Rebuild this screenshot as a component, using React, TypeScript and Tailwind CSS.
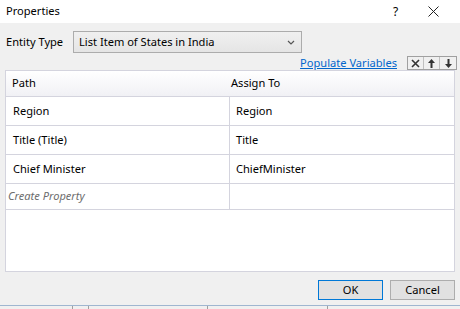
import React from "react"

const rows = [
  { path: "Region", assign: "Region" },
  { path: "Title (Title)", assign: "Title" },
  { path: "Chief Minister", assign: "ChiefMinister" },
]

export default function App() {
  return (
    <div
      className="relative w-[460px] h-[309px] overflow-hidden bg-[#f0f0f0] text-[11.1px] text-black"
      style={{ fontFamily: '"Noto Sans", "Open Sans", sans-serif' }}
    >
      {/* Title bar */}
      <div className="flex h-[23px] items-center bg-white pl-[6px]">
        <span className="flex-1">Properties</span>
        <span className="w-[14px] text-[12px]">?</span>
        <div className="flex w-[53px] justify-center">
          <svg width="11" height="11" viewBox="0 0 11 11" stroke="#222" strokeWidth="1">
            <path d="M0.5 0.5 L10.5 10.5 M10.5 0.5 L0.5 10.5" />
          </svg>
        </div>
      </div>

      <div className="px-[5px]">
        {/* Entity type */}
        <div className="mt-[8px] flex h-[22px] items-center">
          <span className="w-[68px] pl-[1px]">Entity Type</span>
          <div className="flex h-[22px] w-[229px] items-center border border-[#acacac] bg-gradient-to-b from-[#f0f0f0] to-[#e5e5e5] pl-[5px] pr-[6px]">
            <span className="flex-1">List Item of States in India</span>
            <svg width="8" height="5" viewBox="0 0 8 5" fill="none" stroke="#555" strokeWidth="1.2">
              <path d="M1 1 L4 4 L7 1" />
            </svg>
          </div>
        </div>

        {/* Populate + tool buttons */}
        <div className="mt-[1px] flex h-[16px] items-end justify-end">
          <span className="mr-[10px] leading-[15px] text-[#0066cc] underline">Populate Variables</span>
          <div className="mr-[-2px] flex h-[14px] border border-[#a0a0a0] bg-[#f0f0f0]">
            <div className="flex w-[16px] items-center justify-center border-r border-[#c0c0c0]">
              <svg width="9" height="9" viewBox="0 0 9 9" stroke="#333" strokeWidth="1.6">
                <path d="M1 1 L8 8 M8 1 L1 8" />
              </svg>
            </div>
            <div className="flex w-[16px] items-center justify-center border-r border-[#c0c0c0]">
              <svg width="7" height="9" viewBox="0 0 7 9" fill="#333">
                <path d="M3.5 0 L7 4 L4.5 4 L4.5 9 L2.5 9 L2.5 4 L0 4 Z" />
              </svg>
            </div>
            <div className="flex w-[16px] items-center justify-center">
              <svg width="7" height="9" viewBox="0 0 7 9" fill="#333">
                <path d="M3.5 9 L7 5 L4.5 5 L4.5 0 L2.5 0 L2.5 5 L0 5 Z" />
              </svg>
            </div>
          </div>
        </div>

        {/* Table */}
        <div className="h-[202px] w-[450px] border border-[#d4d4de] bg-white">
          <div className="flex h-[26px] items-center border-b border-[#d4d4de] bg-gradient-to-b from-white to-[#f1f1f5]">
            <span className="w-[224px] pl-[6px]">Path</span>
            <span className="pl-[1px]">Assign To</span>
          </div>
          {rows.map((r) => (
            <div key={r.path} className="flex h-[29px] border-b border-[#d4d4de]">
              <div className="flex w-[224px] items-center border-r border-[#d4d4de] pl-[7px]">{r.path}</div>
              <div className="flex items-center pl-[6px]">{r.assign}</div>
            </div>
          ))}
          <div className="flex h-[26px] border-b border-[#d4d4de]">
            <div className="flex w-[224px] items-center border-r border-[#d4d4de] pl-[2px] italic text-[#6d6d6d]">
              Create Property
            </div>
            <div />
          </div>
        </div>

        {/* Buttons */}
        <div className="mt-[8px] flex justify-end gap-[7px]">
          <button className="h-[20px] w-[65px] border border-[#0078d7] bg-[#e1e1e1]">OK</button>
          <button className="h-[20px] w-[65px] border border-[#adadad] bg-[#e1e1e1]">Cancel</button>
        </div>
      </div>

      {/* Bottom strip */}
      <div className="absolute bottom-0 left-0 right-0 h-[4px] border-t border-[#9fb6d0] bg-[#f0f0f0]">
        <div className="absolute left-[72px] top-0 h-[3px] w-px bg-[#a0a0a0]" />
        <div className="absolute left-[88px] top-0 h-[3px] w-px bg-[#a0a0a0]" />
        <div className="absolute left-[207px] top-0 h-[3px] w-px bg-[#a0a0a0]" />
        <div className="absolute left-[327px] top-0 h-[3px] w-px bg-[#a0a0a0]" />
      </div>
    </div>
  )
}
